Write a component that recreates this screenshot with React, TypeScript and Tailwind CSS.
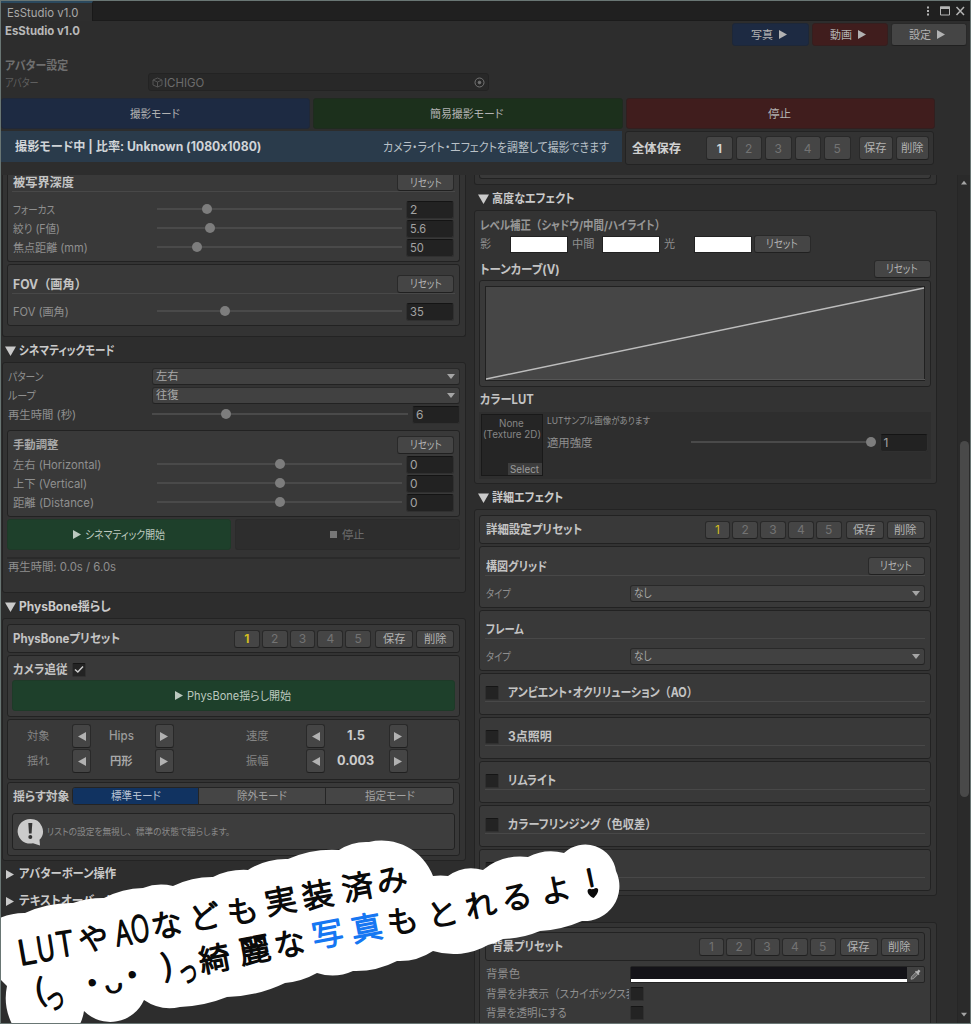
import React, { useLayoutEffect, useRef, useState } from "react";
import { twMerge } from "tailwind-merge";

const CJK = /[\u3000-\u9fff]/;

/* Kana is set proportionally, full-width brackets and commas keep their cell. */
function typeset(children: React.ReactNode) {
  if (typeof children !== "string") return children;
  return children.split(/([（）、]+)/).map((part, i) =>
    i % 2 ? (
      <span key={i} className="[font-feature-settings:normal]">
        {part}
      </span>
    ) : (
      part
    ),
  );
}

/* Single line label squeezed or stretched to the width its slot asks for. */
function T({ w, className = "", children }: { w?: number; className?: string; children: React.ReactNode }) {
  const ref = useRef<HTMLSpanElement>(null);
  const [scale, setScale] = useState(1);
  useLayoutEffect(() => {
    if (w && ref.current) setScale(w / ref.current.offsetWidth);
  }, [w]);
  const low = typeof children === "string" && CJK.test(children) ? "pt-[2px]" : "";
  return (
    <span className={twMerge("flex shrink-0 items-center leading-none whitespace-nowrap", low, className)} style={w ? { width: w } : undefined}>
      <span ref={ref} className="inline-block origin-left" style={{ transform: `scaleX(${scale})` }}>
        {typeset(children)}
      </span>
    </span>
  );
}

type P = { className?: string; children?: React.ReactNode };

const Outer = ({ className = "", children }: P) => (
  <div className={twMerge("flex shrink-0 flex-col rounded-[3px] border border-[#232323] bg-[#333333]", className)}>{children}</div>
);
const Inner = ({ className = "", children }: P) => (
  <div className={twMerge("flex shrink-0 flex-col rounded-[3px] border border-[#222222] bg-[#393939]", className)}>{children}</div>
);
const Btn = ({ className = "", children }: P) => (
  <div className={twMerge("flex shrink-0 items-center justify-center rounded-[3px] border border-[#292929] border-b-[#202020] bg-[#454545] text-[11.5px] text-[#b2b2b2]", className)}>
    {children}
  </div>
);
const Reset = ({ className = "" }: P) => (
  <Btn className={twMerge("h-[18px] w-[57px]", className)}>
    <T w={31.5}>リセット</T>
  </Btn>
);
const Field = ({ children, className = "" }: P) => (
  <div className={twMerge("flex h-[18px] w-[48px] shrink-0 items-center rounded-[3px] border border-[#303030] border-t-[#141414] bg-[#222222] pt-px pl-[3px] text-[12px] text-[#a2a2a2]", className)}>
    {children}
  </div>
);
function Slider({ knob, className = "" }: { knob: number; className?: string }) {
  return (
    <div className={twMerge("relative mb-[1px] h-[2px] shrink-0 bg-[#4a4a4a]", className)}>
      <div className="absolute -top-[4px] size-[10px] -translate-x-1/2 rounded-full bg-[#7d7d7d]" style={{ left: knob }} />
    </div>
  );
}
function SliderRow({ label, w, knob, value, vw }: { label: string; w: number; knob: number; value: string; vw?: number }) {
  return (
    <div className="flex h-[19px] shrink-0 items-center pl-[5px] text-[11.5px] text-[#8f8f8f]">
      <div className="w-[144px] shrink-0">
        <T w={w}>{label}</T>
      </div>
      <Slider knob={knob} className="w-[245px]" />
      <Field className="ml-[4px]">
        <T w={vw}>{value}</T>
      </Field>
    </div>
  );
}
const Right = () => (
  <svg width="8" height="9" viewBox="0 0 8 9" className="shrink-0">
    <path d="M0 0L8 4.5L0 9Z" fill="currentColor" />
  </svg>
);
const Left = () => (
  <svg width="8" height="9" viewBox="0 0 8 9" className="shrink-0">
    <path d="M8 0L0 4.5L8 9Z" fill="currentColor" />
  </svg>
);
const Down = ({ className = "" }: P) => (
  <svg width="8" height="5" viewBox="0 0 8 5" className={twMerge("shrink-0 text-[#a5a5a5]", className)}>
    <path d="M0 0H8L4 5Z" fill="currentColor" />
  </svg>
);
const Head = ({ w, children, closed, className = "" }: P & { w: number; closed?: boolean }) => (
  <div className={twMerge("flex h-[20px] shrink-0 items-center text-[12.5px] font-bold text-[#cacaca]", className)}>
    <div className="flex w-[14px] shrink-0">
      {closed ? (
        <svg width="9" height="11" viewBox="0 0 9 11" className="ml-[1px]">
          <path d="M0 1L8 5.5L0 10Z" fill="currentColor" />
        </svg>
      ) : (
        <svg width="11" height="10" viewBox="0 0 11 10">
          <path d="M0 0.5H11L5.5 10Z" fill="currentColor" />
        </svg>
      )}
    </div>
    <T w={w} className="pt-px">
      {children}
    </T>
  </div>
);
const Title = ({ w, children, className = "" }: P & { w: number }) => (
  <T w={w} className={twMerge("text-[12.5px] font-bold text-[#c4c4c4]", className)}>
    {children}
  </T>
);
const Drop = ({ w, children, className = "" }: P & { w: number }) => (
  <div className={twMerge("flex h-[17px] shrink-0 items-center justify-between rounded-[3px] border border-[#292929] border-b-[#222222] bg-[#414141] pr-[4px] pl-[3px] text-[11.5px] text-[#a9a9a9]", className)}>
    <T w={w} className="pt-px">
      {children}
    </T>
    <Down />
  </div>
);
function Preset({ active = true, bold = false }: { active?: boolean; bold?: boolean }) {
  return (
    <div className="flex shrink-0 items-center">
      {["1", "2", "3", "4", "5"].map((n) => (
        <Btn
          key={n}
          className={twMerge("mr-[2px] h-[18px] w-[25.8px] text-[12px] text-[#737373]", n === "1" && active && "text-[#d2bd20]", n === "1" && bold && "font-bold")}
        >
          {n}
        </Btn>
      ))}
      <Btn className="ml-[2px] h-[18px] w-[38px]">
        <T w={22.5}>保存</T>
      </Btn>
      <Btn className="ml-[3px] h-[18px] w-[38px]">
        <T w={22.5}>削除</T>
      </Btn>
    </div>
  );
}
const Check = ({ className = "", children }: P) => (
  <div className={twMerge("flex size-[14px] shrink-0 items-center justify-center rounded-[2px] border border-[#303030] border-t-[#151515] bg-[#232323]", className)}>{children}</div>
);
const Rule = ({ className = "" }: P) => <div className={twMerge("h-px shrink-0 bg-[#484848]", className)} />;

function Toggle({ label, w }: { label?: string; w?: number }) {
  return (
    <Inner className="mt-[2px] h-[42px] px-[5px]">
      <div className="mt-[10px] flex h-[17px] shrink-0 items-center">
        <Check />
        <Title w={w ?? 80} className="ml-[9px]">
          {label}
        </Title>
      </div>
      <Rule />
    </Inner>
  );
}

function TopArea() {
  return (
    <div className="flex h-[174px] shrink-0 flex-col">
      <div className="flex h-[20px] shrink-0 items-start justify-between border-b border-[#1b1b1b] bg-[#202020]">
        <div className="flex h-[20px] w-[92px] items-center border-t-2 border-r border-t-[#2b495e] border-r-[#191919] bg-[#2e2e2e] pt-[1px] pl-[6px] text-[12px] text-[#a9a9a9]">
          <T w={71}>EsStudio v1.0</T>
        </div>
        <div className="flex h-[19px] items-center pr-[4px] text-[#b4b4b4]">
          <svg width="40" height="12" viewBox="0 0 40 12">
            <path d="M1 1.5H3V3.5H1ZM1 5H3V7H1ZM1 8.5H3V10.5H1Z" fill="currentColor" />
            <path d="M14.5 2H23.5V10H14.5Z" stroke="currentColor" fill="none" />
            <path d="M14 1.5H24V4H14Z" fill="currentColor" />
            <path d="M30.5 2L38 10M38 2L30.5 10" stroke="currentColor" strokeWidth="1.5" fill="none" />
          </svg>
        </div>
      </div>
      <div className="flex h-[35px] shrink-0 justify-between pr-[3px] pl-[4px]">
        <T w={75} className="h-[19px] text-[12px] font-bold text-[#b8b8b8]">
          EsStudio v1.0
        </T>
        <div className="mt-[2px] flex gap-[3px]">
          <Btn className="h-[23px] w-[77px] gap-[6px] border-[#1d2738] bg-[#1d2a42] pr-[4px]">
            <T w={22}>写真</T>
            <Right />
          </Btn>
          <Btn className="h-[23px] w-[76px] gap-[6px] border-[#351e1e] bg-[#401d1d] pr-[5px]">
            <T w={22}>動画</T>
            <Right />
          </Btn>
          <Btn className="h-[23px] w-[76px] gap-[6px] pr-[5px]">
            <T w={22}>設定</T>
            <Right />
          </Btn>
        </div>
      </div>
      <T w={63} className="ml-[4px] h-[17px] text-[12px] font-bold text-[#6f6f6f]">
        アバター設定
      </T>
      <div className="flex h-[18px] shrink-0 items-center pl-[4px] text-[11.5px] text-[#5f5f5f]">
        <div className="w-[143px]">
          <T w={34} className="pt-[3px]">
            アバター
          </T>
        </div>
        <div className="flex h-[18px] w-[341px] items-center rounded-[3px] border border-[#232323] bg-[#282828] pr-[3px] pl-[3px] text-[12px] text-[#6c6c6c]">
          <svg width="11" height="11" viewBox="0 0 11 11" fill="none" stroke="#555555">
            <path d="M1 3L5.5 1L10 3V8L5.5 10L1 8ZM1 3L5.5 5L10 3M5.5 5V10" />
          </svg>
          <T w={40} className="ml-[1px] pt-[2px]">
            ICHIGO
          </T>
          <svg width="11" height="11" viewBox="0 0 11 11" className="ml-auto" fill="none" stroke="#747474">
            <circle cx="5.5" cy="5.5" r="4.5" />
            <circle cx="5.5" cy="5.5" r="1.3" fill="#747474" />
          </svg>
        </div>
      </div>
      <div className="mt-[7px] flex h-[31px] shrink-0 gap-[3px]">
        <Btn className="h-[31px] w-[309px] border-[#202838] bg-[#1d2a42] pr-[2px]">
          <T w={49.5}>撮影モード</T>
        </Btn>
        <Btn className="h-[31px] w-[310px] border-[#1f2b1f] bg-[#1c301c] pr-[3px]">
          <T w={73}>簡易撮影モード</T>
        </Btn>
        <Btn className="h-[31px] w-[309px] border-[#321f1f] bg-[#401d1d] pr-[2px]">
          <T w={23}>停止</T>
        </Btn>
      </div>
      <div className="mt-[2px] flex shrink-0">
        <div className="flex h-[31px] w-[621px] items-center justify-between bg-[#2a3b4b] pr-[13px] pl-[14px]">
          <T w={246} className="text-[12.5px] font-bold text-[#d0d4d8]">
            撮影モード中 | 比率: Unknown (1080x1080)
          </T>
          <T w={226} className="text-[12px] text-[#b9c1c8]">
            カメラ・ライト・エフェクトを調整して撮影できます
          </T>
        </div>
        <div className="ml-[3px] flex h-[34px] w-[309px] items-center rounded-[3px] border border-[#232323] bg-[#333333] pl-[6px]">
          <T w={49} className="mr-[25px] text-[12.5px] font-bold text-[#d0d0d0]">
            全体保存
          </T>
          {["1", "2", "3", "4", "5"].map((n) => (
            <Btn key={n} className={twMerge("mr-[3px] h-[24px] w-[26.5px] pt-px text-[12px] text-[#737373]", n === "1" && "font-bold text-[#d4d4d4]")}>
              {n}
            </Btn>
          ))}
          <Btn className="ml-[5px] h-[24px] w-[34px]">
            <T w={22.5}>保存</T>
          </Btn>
          <Btn className="ml-[3px] h-[24px] w-[33px]">
            <T w={22.5}>削除</T>
          </Btn>
        </div>
      </div>
    </div>
  );
}

function Step({ label, value, vw, labelGap, tone }: { label: string; value: string; vw: number; labelGap: string; tone: string }) {
  return (
    <div className="flex shrink-0 items-center">
      <T w={22.5} className="pt-px text-[11.5px] text-[#858585]">
        {label}
      </T>
      <Btn className={twMerge("h-[24px] w-[19px]", labelGap)}>
        <Left />
      </Btn>
      <div className={twMerge("flex w-[63.5px] justify-center pr-[3px] text-[12.5px]", tone)}>
        <T w={vw} className="pt-px">
          {value}
        </T>
      </div>
      <Btn className="h-[24px] w-[19px]">
        <Right />
      </Btn>
    </div>
  );
}

function LeftColumn() {
  return (
    <div className="flex w-[464px] shrink-0 flex-col">
      <Outer className="h-[162px] rounded-t-none border-t-0 pr-[5px] pl-[4px]">
        <Inner className="h-[87px] rounded-t-none border-t-0">
          <div className="flex h-[16px] shrink-0 items-center justify-between pr-[5px] pl-[5px]">
            <Title w={61.5} className="pt-0">
              被写界深度
            </Title>
            <Reset className="h-[16px] rounded-t-none border-t-0" />
          </div>
          <Rule className="mx-[4px] mb-[8px]" />
          <SliderRow label="フォーカス" w={42} knob={50} value="2" />
          <SliderRow label="絞り (F値)" w={47} knob={53} value="5.6" vw={16.5} />
          <SliderRow label="焦点距離 (mm)" w={75} knob={39.5} value="50" vw={14} />
        </Inner>
        <Inner className="mt-[2px] h-[62px]">
          <div className="mt-[10px] flex h-[18px] shrink-0 items-center justify-between pr-[5px] pl-[5px]">
            <Title w={74}>FOV（画角）</Title>
            <Reset />
          </div>
          <Rule className="mx-[4px] mb-[8px]" />
          <SliderRow label="FOV (画角)" w={56} knob={68} value="35" vw={14} />
        </Inner>
      </Outer>
      <Head w={95.5} className="mt-[4px] ml-[3px]">
        シネマティックモード
      </Head>
      <Outer className="mt-[1px] h-[231px] pr-[5px] pl-[4px] text-[11.5px] text-[#8f8f8f]">
        <div className="mt-[4px] flex h-[19px] shrink-0 items-center pl-[1px]">
          <T w={35.5}>パターン</T>
          <Drop w={22.5} className="ml-auto w-[308px]">
            左右
          </Drop>
        </div>
        <div className="flex h-[19px] shrink-0 items-center pl-[1px]">
          <T w={28}>ループ</T>
          <Drop w={22.5} className="ml-auto w-[308px]">
            往復
          </Drop>
        </div>
        <div className="flex h-[19px] shrink-0 items-center pl-[1px]">
          <div className="w-[144px] shrink-0">
            <T w={68}>再生時間 (秒)</T>
          </div>
          <Slider knob={74} className="w-[256px]" />
          <Field className="ml-[4px]">6</Field>
        </div>
        <Inner className="mt-[6px] h-[87px]">
          <div className="mt-[5px] mb-[1px] flex h-[18px] shrink-0 items-center justify-between pr-[5px] pl-[5px]">
            <T w={45.5} className="font-bold text-[#a6a6a6]">
              手動調整
            </T>
            <Reset />
          </div>
          <SliderRow label="左右 (Horizontal)" w={88} knob={122.5} value="0" />
          <SliderRow label="上下 (Vertical)" w={74.5} knob={122.5} value="0" />
          <SliderRow label="距離 (Distance)" w={81} knob={122.5} value="0" />
        </Inner>
        <div className="mt-[2px] flex h-[31px] shrink-0 gap-[4px]">
          <Btn className="h-[31px] w-[224px] gap-[4px] border-[#1e3a28] bg-[#1e402b] text-[#bcc8bf]">
            <Right />
            <T w={80}>シネマティック開始</T>
          </Btn>
          <Btn className="h-[31px] w-[225px] gap-[5px] border-[#2b2b2b] border-b-[#2a2a2a] bg-[#2d2d2d] text-[#6c6c6c]">
            <div className="size-[7px] bg-[#777777]" />
            <T w={22.5}>停止</T>
          </Btn>
        </div>
        <div className="mt-[7px] h-[2px] shrink-0 bg-[#2a2a2a]" />
        <T w={108.5} className="ml-[1px] h-[17px] pt-0">
          再生時間: 0.0s / 6.0s
        </T>
      </Outer>
      <Head w={92} className="mt-[4px] ml-[3px]">
        PhysBone揺らし
      </Head>
      <Outer className="mt-[1px] h-[243px] pr-[5px] pl-[4px]">
        <Inner className="mt-[5px] h-[29px] px-[5px]">
          <div className="flex h-[27px] items-center justify-between">
            <Title w={107.5}>PhysBoneプリセット</Title>
            <Preset bold />
          </div>
        </Inner>
        <Inner className="mt-[2px] h-[62px] px-[4px]">
          <div className="mt-[5px] flex h-[17px] shrink-0 items-center pl-[1px]">
            <Title w={54.5}>カメラ追従</Title>
            <Check className="ml-[4px]">
              <svg width="10" height="9" viewBox="0 0 10 9" fill="none" stroke="#cccccc" strokeWidth="1.5">
                <path d="M1 4.5L3.8 7L9 1.5" />
              </svg>
            </Check>
          </div>
          <Btn className="mt-[2px] h-[31px] gap-[4px] border-[#1e3a28] bg-[#1e402b] text-[#bcc8bf]">
            <Right />
            <T w={104.5}>PhysBone揺らし開始</T>
          </Btn>
        </Inner>
        <Inner className="mt-[2px] h-[61px] gap-[1px] pt-[4px] pl-[18.5px]">
          <div className="flex h-[24px] shrink-0 gap-[72px]">
            <Step label="対象" value="Hips" vw={25} labelGap="ml-[23px]" tone="font-medium text-[#9b9b9b]" />
            <Step label="速度" value="1.5" vw={17.5} labelGap="ml-[38px]" tone="font-bold text-[#cccccc]" />
          </div>
          <div className="flex h-[24px] shrink-0 gap-[72px]">
            <Step label="揺れ" value="円形" vw={22.5} labelGap="ml-[23px]" tone="text-[11.5px] font-bold text-[#a8a8a8]" />
            <Step label="振幅" value="0.003" vw={37.5} labelGap="ml-[38px]" tone="font-bold text-[#cccccc]" />
          </div>
        </Inner>
        <Inner className="mt-[2px] h-[74px] px-[4px]">
          <div className="mt-[4px] flex h-[18px] shrink-0 items-center pl-[1px] text-[11.5px] text-[#a2a2a2]">
            <Title w={56}>揺らす対象</Title>
            <div className="ml-[3px] flex h-[18px] w-[382px] overflow-hidden rounded-[3px] border border-[#242424] bg-[#454545]">
              <div className="flex w-[125px] items-center justify-center bg-[#113361] text-[#b6c1d2]">
                <T w={49.5} className="pt-px">
                  標準モード
                </T>
              </div>
              <div className="flex w-[128px] items-center justify-center border-r border-l border-[#252525]">
                <T w={49.5} className="pt-px">
                  除外モード
                </T>
              </div>
              <div className="flex w-[127px] items-center justify-center">
                <T w={49.5} className="pt-px">
                  指定モード
                </T>
              </div>
            </div>
          </div>
          <div className="mt-[8px] flex h-[37px] shrink-0 items-center rounded-[3px] border border-[#222222] bg-[#3d3d3d] pl-[4px]">
            <svg width="27" height="28" viewBox="0 0 27 28" className="shrink-0">
              <path d="M13.5 1A12.3 12.3 0 1 0 16 25.2L23 27.5L22.5 21.8A12.3 12.3 0 0 0 13.5 1Z" fill="#cbcbcb" />
              <path d="M11.3 5H15.3L14.6 15.5H12Z" fill="#333333" />
              <circle cx="13.3" cy="19" r="2" fill="#333333" />
            </svg>
            <T w={183} className="ml-[3px] pt-px text-[9.5px] text-[#8a8a8a]">
              リストの設定を無視し、標準の状態で揺らします。
            </T>
          </div>
        </Inner>
      </Outer>
      <Head w={97} closed className="mt-[3px] ml-[3px]">
        アバターボーン操作
      </Head>
      <Head w={108} closed className="mt-[7px] ml-[3px]">
        テキストオーバーレイ
      </Head>
    </div>
  );
}

const Swatch = ({ className = "" }: P) => <div className={twMerge("h-[17px] w-[58px] shrink-0 border border-[#222222] bg-white", className)} />;

function RightColumn() {
  return (
    <div className="ml-[7.5px] flex w-[463px] shrink-0 flex-col text-[11.5px] text-[#8f8f8f]">
      <Outer className="h-[10px] rounded-t-none border-t-0 pr-[5px] pl-[4px]">
        <Inner className="h-[4px] rounded-t-none border-t-0" />
      </Outer>
      <Head w={82.5} className="mt-[4px] ml-[4px]">
        高度なエフェクト
      </Head>
      <Outer className="mt-[1px] h-[274px] pr-[5px] pl-[4px]">
        <T w={185} className="mt-[6px] ml-[1px] h-[17px] pt-px text-[12px] font-bold text-[#979797]">
          レベル補正（シャドウ/中間/ハイライト）
        </T>
        <div className="mt-[1px] flex h-[18px] shrink-0 items-center pl-[1px]">
          <T w={11.5} className="mr-[19px]">
            影
          </T>
          <Swatch />
          <T w={22.5} className="mr-[7px] ml-[4px]">
            中間
          </T>
          <Swatch />
          <T w={11.5} className="mr-[18.5px] ml-[4px]">
            光
          </T>
          <Swatch />
          <Reset className="ml-[2px]" />
        </div>
        <div className="mt-[7px] flex h-[18px] shrink-0 items-center justify-between pl-[1px]">
          <Title w={80}>トーンカーブ(V)</Title>
          <Reset />
        </div>
        <Inner className="mt-[2px] h-[107px] px-[5px] pt-[5px]">
          <div className="h-[95px] border border-[#212121] bg-[#464646]">
            <svg width="439" height="93" viewBox="0 0 439 93">
              <path d="M0 92.5H439" stroke="#555555" />
              <path d="M0 92L438 1" stroke="#bdbdbd" strokeWidth="1.5" />
            </svg>
          </div>
        </Inner>
        <Title w={54} className="mt-[4px] ml-[1px] h-[18px] pt-px">
          カラーLUT
        </Title>
        <div className="mt-[3px] flex h-[67px] shrink-0 bg-[#2e2e2e] pt-[2px] pl-[2px]">
          <div className="flex h-[62px] w-[62px] shrink-0 flex-col items-center border border-[#191919] bg-[#252525] pt-[2px] text-[10px] text-[#868686]">
            <T w={24.5} className="h-[11px]">
              None
            </T>
            <T w={58} className="h-[12px]">
              (Texture 2D)
            </T>
            <div className="mt-auto flex h-[12px] w-[34px] items-center justify-center self-end bg-[#3d3d3d] text-[#9b9b9b]">
              <T w={28.5}>Select</T>
            </div>
          </div>
          <div className="ml-[4px] flex flex-1 flex-col">
            <T w={103} className="mt-[2px] h-[11px] pt-0 text-[9.5px]">
              LUTサンプル画像があります
            </T>
            <div className="mt-[6px] flex h-[19px] items-center">
              <div className="w-[144px] shrink-0">
                <T w={45.5}>適用強度</T>
              </div>
              <Slider knob={180} className="w-[184px]" />
              <Field className="ml-[5px]">1</Field>
            </div>
          </div>
        </div>
      </Outer>
      <Head w={71.5} className="mt-[4px] ml-[4px]">
        詳細エフェクト
      </Head>
      <Outer className="mt-[1px] h-[387px] pr-[5px] pl-[4px]">
        <Inner className="mt-[5px] h-[29px] pr-[5px] pl-[6px]">
          <div className="flex h-[27px] items-center justify-between">
            <Title w={96}>詳細設定プリセット</Title>
            <Preset />
          </div>
        </Inner>
        <Inner className="mt-[2px] h-[62px] px-[5px]">
          <div className="mt-[10px] flex h-[18px] shrink-0 items-center justify-between pl-[1px]">
            <Title w={61}>構図グリッド</Title>
            <Reset />
          </div>
          <Rule />
          <div className="mt-[8px] flex h-[19px] shrink-0 items-center justify-between pl-[1px]">
            <T w={25}>タイプ</T>
            <Drop w={17.5} className="w-[295px]">
              なし
            </Drop>
          </div>
        </Inner>
        <Inner className="mt-[2px] h-[61px] px-[5px]">
          <div className="mt-[10px] flex h-[17px] shrink-0 items-center justify-between pl-[1px]">
            <Title w={38}>フレーム</Title>
          </div>
          <Rule />
          <div className="mt-[8px] flex h-[19px] shrink-0 items-center justify-between pl-[1px]">
            <T w={25}>タイプ</T>
            <Drop w={17.5} className="w-[295px]">
              なし
            </Drop>
          </div>
        </Inner>
        <Toggle label="アンビエント・オクリリューション（AO）" w={190} />
        <Toggle label="3点照明" w={44} />
        <Toggle label="リムライト" w={48.5} />
        <Toggle label="カラーフリンジング（色収差）" w={148} />
        <Toggle />
      </Outer>
      <Outer className="mt-[26px] h-[140px] pr-[5px] pl-[4px]">
        <Inner className="mt-[4px] h-[130px] px-[5px]">
          <Inner className="mt-[4px] h-[29px] pr-[5px] pl-[6px]">
            <div className="flex h-[27px] items-center justify-between">
              <Title w={71}>背景プリセット</Title>
              <Preset active={false} />
            </div>
          </Inner>
          <div className="mt-[4px] flex h-[18px] shrink-0 items-center pl-[1px]">
            <T w={34.5} className="mr-[110px]">
              背景色
            </T>
            <div className="flex h-[17px] w-[295px] rounded-[2px] border border-[#242424] bg-[#414141]">
              <div className="h-[15px] w-[276px] border-b-[3px] border-white bg-[#141318]" />
              <svg width="17" height="15" viewBox="0 0 17 15">
                <path d="M4 12.2L4.5 9.8L9 5.2L11 7.2L6.5 11.7Z" fill="#6a6a6a" stroke="#aaaaaa" strokeWidth="0.8" />
                <path d="M8 4.5L9 3.7L10 4.5L11.5 2.5L13.5 4L11.8 6.2L12.5 7.2L11.6 8Z" fill="#b5b5b5" />
              </svg>
            </div>
          </div>
          <div className="mt-[1px] flex h-[19px] shrink-0 items-center pl-[1px]">
            <div className="mr-[1.5px] w-[143px] shrink-0 overflow-hidden">
              <T w={172}>背景を非表示（スカイボックス表示）</T>
            </div>
            <Check />
          </div>
          <div className="flex h-[19px] shrink-0 items-center pl-[1px]">
            <div className="w-[144.5px] shrink-0">
              <T w={81}>背景を透明にする</T>
            </div>
            <Check />
          </div>
        </Inner>
      </Outer>
    </div>
  );
}

/* Caption letters: glyph, centre x, centre y. */
type Glyph = [string, number, number];
const line1: Glyph[] = [
  ["な", 167, 925], ["ど", 205, 917], ["も", 243, 911], ["実", 281, 901], ["装", 318, 895], ["済", 358, 887], ["み", 392, 880],
];
const line2a: Glyph[] = [["綺", 215, 959], ["麗", 255, 950], ["な", 290, 944]];
const line2b: Glyph[] = [["写", 328, 934], ["真", 367, 928]];
const line2c: Glyph[] = [["も", 403, 921], ["と", 443, 914], ["れ", 481, 905], ["る", 517, 897], ["よ", 556, 890]];

function Hand({ glyphs, color = "#0a0a0a" }: { glyphs: Glyph[]; color?: string }) {
  return (
    <text
      x={glyphs.map((g) => g[1] + 2).join(" ")}
      y={glyphs.map((g) => g[2] + 14).join(" ")}
      rotate="-11"
      fill={color}
      stroke={color}
    >
      {glyphs.map((g) => g[0]).join("")}
    </text>
  );
}

function Mark({ x, y, angle = -11, squeeze = 1, size = 32, children }: { x: number; y: number; angle?: number; squeeze?: number; size?: number; children: string }) {
  return (
    <text transform={`translate(${x} ${y}) rotate(${angle}) scale(${squeeze} 1)`} fontSize={size} fill="#0a0a0a" stroke="#0a0a0a">
      {children}
    </text>
  );
}

function Sticker() {
  return (
    <svg className="pointer-events-none absolute -top-px -left-px" width="971" height="1024" viewBox="0 0 971 1024">
      <path
        fill="#ffffff"
        d="M0 918A60 60 0 0 1 25 913A110 110 0 0 1 73 903A90 90 0 0 1 104 898A90 90 0 0 1 143 888A50 50 0 0 1 173 886A90 90 0 0 1 213 877A70 70 0 0 1 248 870A70 70 0 0 1 288 859A110 110 0 0 1 339 850A50 50 0 0 1 369 842A55 55 0 0 1 433 876A60 60 0 0 1 448 876A40 40 0 0 1 483 870A60 60 0 0 1 528 857A50 50 0 0 1 564 853A31 31 0 0 1 616 871A35 35 0 0 1 582 921A120 120 0 0 1 540 931A100 100 0 0 1 503 939A60 60 0 0 1 488 945A70 70 0 0 1 433 951A60 60 0 0 1 397 961A90 90 0 0 1 353 971A50 50 0 0 1 317 973A80 80 0 0 1 285 983A140 140 0 0 1 227 997A140 140 0 0 1 180 1007A46 46 0 0 1 144 1000A37 37 0 0 1 84 1011A45 45 0 0 1 80 1024H12A58 58 0 0 1 7 986L0 979Z"
      />
      <g
        fontFamily="'Noto Sans CJK JP', sans-serif"
        fontSize="31"
        fontWeight="300"
        strokeWidth="1.7"
        strokeLinejoin="round"
        strokeLinecap="round"
        textAnchor="middle"
        className="[font-feature-settings:normal]"
      >
        <Mark x={28.5} y={964} angle={-10} squeeze={0.98} size={34}>
          L
        </Mark>
        <Mark x={47.5} y={960.5} angle={-9} squeeze={0.78} size={34}>
          U
        </Mark>
        <Mark x={67} y={956} angle={-9} squeeze={0.85} size={34}>
          T
        </Mark>
        <Mark x={95.5} y={949.5} size={30}>
          や
        </Mark>
        <Mark x={125} y={945} angle={-9} squeeze={0.78} size={34}>
          A
        </Mark>
        <Mark x={142} y={941.5} angle={-9} squeeze={0.7} size={36}>
          O
        </Mark>
        <Hand glyphs={line1} />
        <Hand glyphs={line2a} />
        <Hand glyphs={line2b} color="#1677f2" />
        <Hand glyphs={line2c} />
        <Mark x={41.5} y={1001} angle={-10} squeeze={1.1} size={30}>
          (
        </Mark>
        <Mark x={57} y={1009} squeeze={0.65} size={32}>
          っ
        </Mark>
        <Mark x={94.5} y={994} size={30}>
          ・
        </Mark>
        <text transform="translate(115 992) rotate(-11) scale(1.2 1)" fontFamily="'DejaVu Sans', sans-serif" fontSize="27" fill="#0a0a0a" stroke="#0a0a0a">
          ᴗ
        </text>
        <Mark x={134.5} y={986} size={30}>
          ・
        </Mark>
        <Mark x={169} y={976} angle={-10} squeeze={1.1} size={30}>
          )
        </Mark>
        <Mark x={190} y={982} squeeze={0.65} size={32}>
          っ
        </Mark>
        <Mark x={593.5} y={893} angle={-12} size={33}>
          !
        </Mark>
      </g>
      <path d="M593.5 898C589 896 586.5 892 588 889.5C590 887.5 592.5 889.5 593 891C593.5 888 596.5 887 598 889C599 891.5 596 896 593.5 898Z" fill="#0a0a0a" />
    </svg>
  );
}

export default function App() {
  return (
    <div className="relative flex h-[1024px] w-[971px] flex-col overflow-hidden border border-[#697674] bg-[#2d2d2d] font-['Inter','Noto_Sans_CJK_JP',sans-serif] [font-feature-settings:'palt','calt'_0]">
      <TopArea />
      <div className="flex min-h-0 flex-1 overflow-hidden">
        <div className="w-px shrink-0" />
        <LeftColumn />
        <RightColumn />
        <div className="ml-auto flex w-[13px] shrink-0 flex-col items-center border-l border-[#262626] bg-[#2a2a2a]">
          <Down className="mt-[5px] w-[6px] rotate-180" />
          <div className="mt-[256px] h-[356px] w-[9px] shrink-0 rounded-full bg-[#494949]" />
          <Down className="mt-auto mb-[6px] w-[6px]" />
        </div>
      </div>
      <Sticker />
    </div>
  );
}
